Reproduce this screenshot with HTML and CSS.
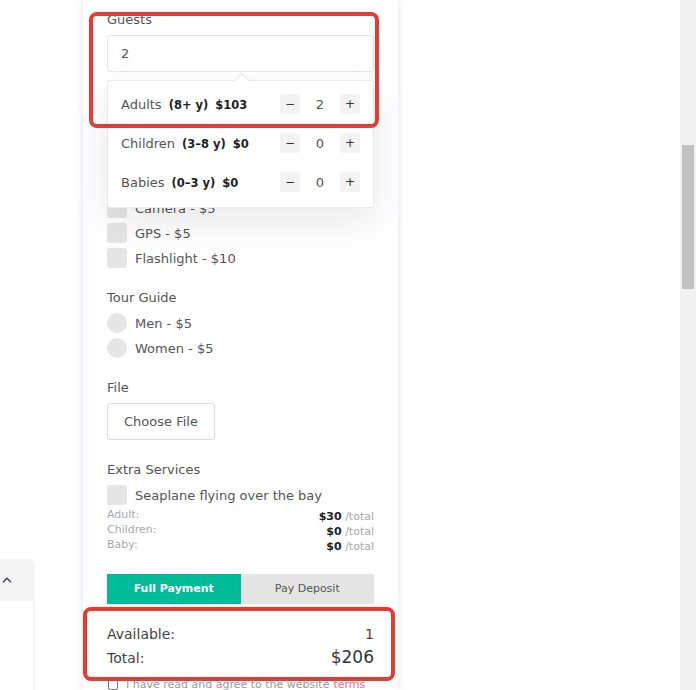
FILE: index.html
```html
<!DOCTYPE html>
<html lang="en">
<head>
  <meta charset="UTF-8">
  <title>Tour booking</title>
  <link rel="stylesheet" href="styles.css">
</head>
<body>
<div class="page">
  <aside class="side">
    <div class="side-toggle">
      <svg width="10" height="6" viewBox="0 0 10 6"><path d="M1 5.2 L5 1.2 L9 5.2" fill="none" stroke="#3a4150" stroke-width="1.4"/></svg>
    </div>
    <div class="side-body"></div>
  </aside>

  <main class="card">
    <!-- guests -->
    <div class="field field-guests">
      <div class="field-label">Guests</div>
      <div class="guests">
        <div class="input">2</div>
        <div class="guest-menu">
          <div class="guest-row">
            <div class="guest-name"><span>Adults</span><span class="hl">(8+ y)</span><span class="hl">$103</span></div>
            <div class="counter"><span class="step">&minus;</span><span class="count">2</span><span class="step">+</span></div>
          </div>
          <div class="guest-row">
            <div class="guest-name"><span>Children</span><span class="hl">(3–8 y)</span><span class="hl">$0</span></div>
            <div class="counter"><span class="step">&minus;</span><span class="count">0</span><span class="step">+</span></div>
          </div>
          <div class="guest-row">
            <div class="guest-name"><span>Babies</span><span class="hl">(0–3 y)</span><span class="hl">$0</span></div>
            <div class="counter"><span class="step">&minus;</span><span class="count">0</span><span class="step">+</span></div>
          </div>
        </div>
      </div>
    </div>

    <!-- rest of the equipment list sits under the open guest menu -->
    <div class="field">
      <div class="option"><span class="box"></span>Camera - $5</div>
      <div class="option"><span class="box"></span>GPS - $5</div>
      <div class="option"><span class="box"></span>Flashlight - $10</div>
    </div>

    <div class="field">
      <div class="field-label">Tour Guide</div>
      <div class="option"><span class="box round"></span>Men - $5</div>
      <div class="option"><span class="box round"></span>Women - $5</div>
    </div>

    <div class="field">
      <div class="field-label">File</div>
      <div class="file-btn">Choose File</div>
    </div>

    <div class="field field-extra">
      <div class="field-label">Extra Services</div>
      <div class="option"><span class="box"></span>Seaplane flying over the bay</div>
      <div class="prices">
        <div class="price-labels">
          <div>Adult:</div>
          <div>Children:</div>
          <div>Baby:</div>
        </div>
        <div class="price-values">
          <div><b>$30</b> /total</div>
          <div><b>$0</b> /total</div>
          <div><b>$0</b> /total</div>
        </div>
      </div>
    </div>

    <div class="tabs">
      <div class="tab active">Full Payment</div>
      <div class="tab">Pay Deposit</div>
    </div>

    <div class="summary">
      <div class="sum-row"><span>Available:</span><span>1</span></div>
      <div class="sum-row"><span>Total:</span><span class="sum-total">$206</span></div>
    </div>

    <div class="terms"><span class="tick"></span>I have read and agree to the website <a href="#">terms</a></div>
  </main>

  <div class="rest"></div>
  <div class="scrollbar"><div class="thumb"></div></div>

  <!-- annotation frames -->
  <div class="mark mark-guests"></div>
  <div class="mark mark-total"></div>
</div>
</body>
</html>
```

FILE: styles.css
```css
* { box-sizing: border-box; }

body {
  margin: 0;
  background: #fff;
  font-family: "DejaVu Sans", sans-serif;
  color: #555;
  overflow: hidden;
}

.page {
  position: relative;
  display: flex;
  height: 690px;
  overflow: hidden;
}

/* left rail */
.side {
  width: 83px;
  display: flex;
  flex-direction: column;
}

.side-toggle {
  margin-top: 559px;
  width: 35px;
  height: 42px;
  background: #f4f4f4;
  border-radius: 0 6px 0 0;
  display: flex;
  align-items: center;
  padding-left: 2px;
}

.side-body {
  flex: 1;
  width: 35px;
  border-right: 1px solid #ededed;
}

/* booking card */
.card {
  width: 315px;
  background: #fff;
  padding: 12px 24px 0;
  box-shadow: 0 0 7px rgba(70, 80, 140, 0.16);
  position: relative;
  z-index: 1;
}

.field { margin-bottom: 22px; }
.field-guests { margin-bottom: 126px; }
.field-extra { margin-bottom: 20px; }

.field-label {
  font-size: 13px;
  line-height: 16px;
  color: #555;
  margin-bottom: 7px;
}

.guests { position: relative; }

.input {
  height: 37px;
  border: 1px solid #e6e6e6;
  border-radius: 3px;
  padding: 0 13px;
  font-size: 13px;
  line-height: 35px;
  color: #555;
}

.guest-menu {
  position: absolute;
  top: 45px;
  left: 0;
  right: 0;
  background: #fff;
  border: 1px solid #e8e8e8;
  border-radius: 3px;
  padding: 13px 13px 15px;
  box-shadow: 0 14px 40px rgba(0, 0, 0, 0.09);
  display: flex;
  flex-direction: column;
  gap: 19px;
  z-index: 5;
}

.guest-menu::before {
  content: "";
  position: absolute;
  top: -6px;
  left: 50%;
  width: 10px;
  height: 10px;
  margin-left: -5px;
  background: #fff;
  border-left: 1px solid #e8e8e8;
  border-top: 1px solid #e8e8e8;
  transform: rotate(45deg);
}

.guest-row {
  display: flex;
  align-items: center;
  justify-content: space-between;
  height: 20px;
}

.guest-name {
  display: flex;
  align-items: baseline;
  gap: 7px;
  font-size: 13px;
  color: #555;
}
.guest-name .hl {
  color: #1e1e1e;
  font-weight: bold;
  font-size: 11.5px;
}

.counter { display: flex; align-items: center; }

.step {
  width: 20px;
  height: 20px;
  background: #f3f3f3;
  border-radius: 3px;
  font-size: 12px;
  line-height: 20px;
  text-align: center;
  color: #333;
}

.count {
  width: 40px;
  text-align: center;
  font-size: 13px;
  color: #555;
}

.option {
  display: flex;
  align-items: center;
  height: 20px;
  margin-bottom: 5px;
  font-size: 13px;
  color: #555;
}
.option:last-child { margin-bottom: 0; }

.box {
  width: 20px;
  height: 20px;
  background: #e6e6e6;
  border-radius: 3px;
  margin-right: 8px;
  flex: none;
}
.box.round { border-radius: 50%; }

.file-btn {
  width: 108px;
  height: 37px;
  border: 1px solid #dcdcdc;
  border-radius: 3px;
  font-size: 13px;
  line-height: 35px;
  text-align: center;
  color: #555;
}

.field-extra .option { margin-bottom: 2px; }

.prices {
  display: flex;
  justify-content: space-between;
  font-size: 11px;
  line-height: 15px;
  color: #a8a8a8;
}
.price-values { text-align: right; padding-top: 2px; }
.price-values b { color: #1e1e1e; }

.tabs {
  display: flex;
  height: 30px;
  font-size: 11px;
  line-height: 30px;
  text-align: center;
}
.tab {
  flex: 1;
  background: #e5e5e5;
  color: #555;
}
.tab.active {
  background: #00bb97;
  color: #fff;
  font-weight: bold;
}

.summary {
  padding-top: 21px;
  display: flex;
  flex-direction: column;
  gap: 5px;
}
.sum-row {
  display: flex;
  justify-content: space-between;
  align-items: baseline;
  font-size: 14px;
  line-height: 18px;
  color: #444;
}
.sum-total { font-size: 17px; color: #333; }

.terms {
  display: flex;
  align-items: center;
  margin-top: 11px;
  font-size: 11px;
  color: #999;
}
.terms a { color: #ee6b80; text-decoration: none; margin-left: 4px; }
.tick {
  width: 10px;
  height: 10px;
  border: 1px solid #777;
  border-radius: 2px;
  margin: 0 8px 0 1px;
}

.rest { flex: 1; }

.scrollbar {
  width: 16px;
  background: #f1f1f1;
  padding: 145px 2px 0;
}
.thumb {
  height: 144px;
  background: #c1c1c1;
}

/* red review frames drawn over the page */
.mark {
  position: absolute;
  border: 4px solid #e53b32;
  border-radius: 8px;
  z-index: 10;
}
.mark-guests { left: 89px; top: 12px; width: 290px; height: 116px; }
.mark-total { left: 83px; top: 607px; width: 312px; height: 74px; }
```
